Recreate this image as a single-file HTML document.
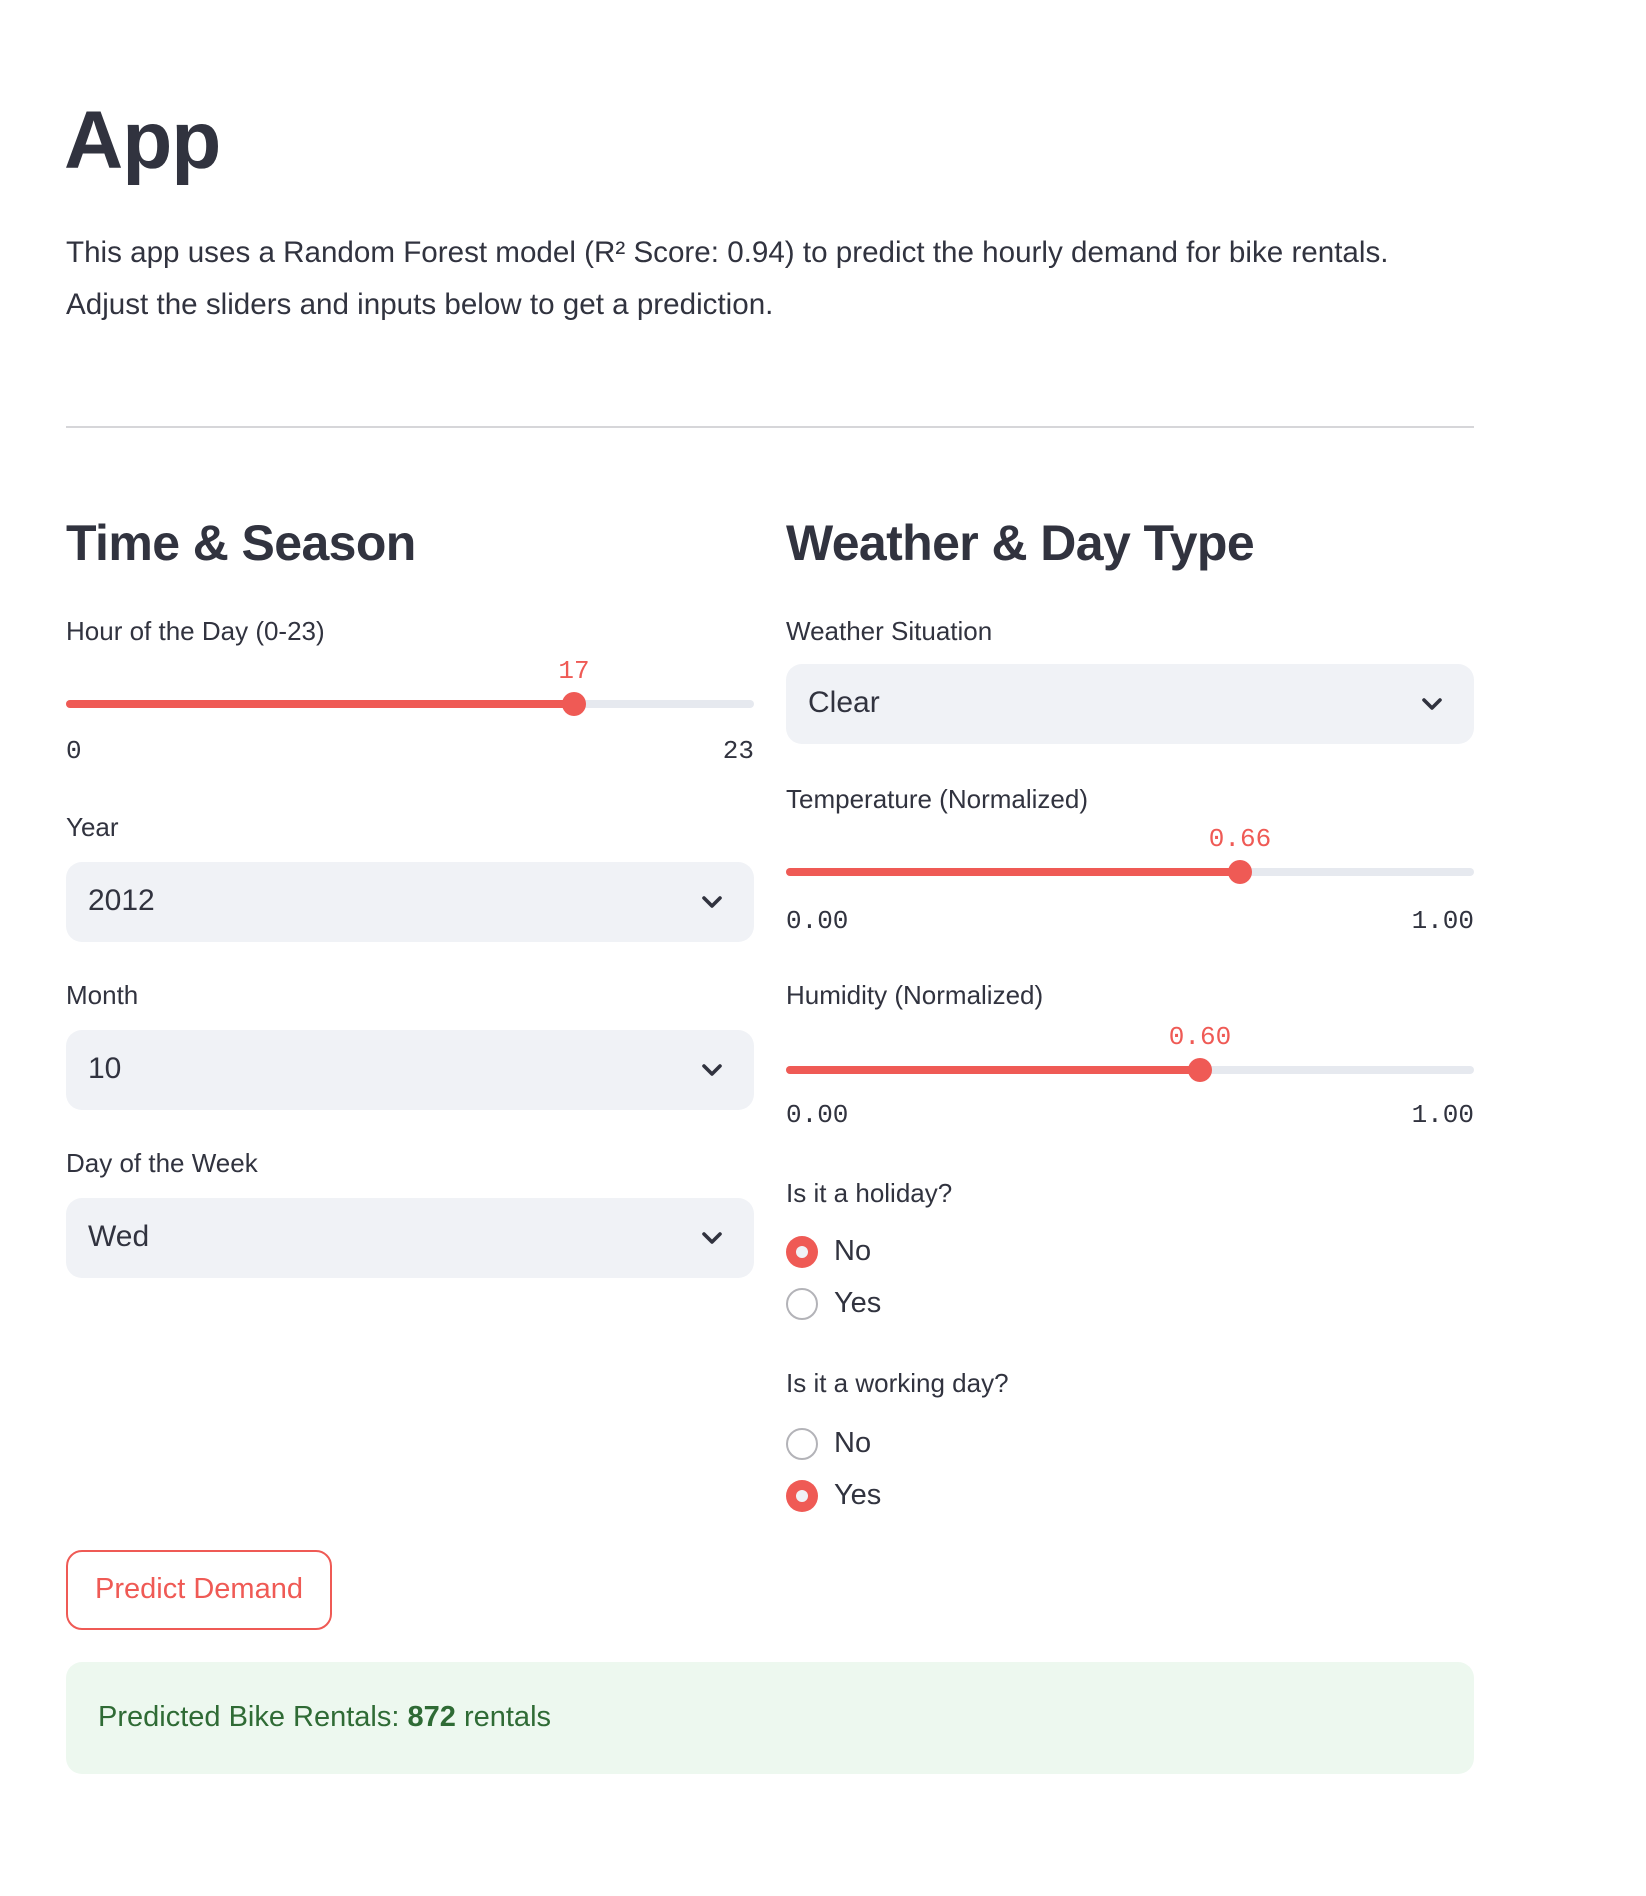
<!DOCTYPE html>
<html><head><meta charset="utf-8">
<style>
html,body{margin:0;padding:0;background:#fff;}
body{width:1646px;height:1896px;overflow:hidden;}
#w{position:absolute;left:0;top:0;width:823px;height:948px;transform:scale(2);transform-origin:0 0;font-family:"Liberation Sans",sans-serif;color:#31333f;}
.a{position:absolute;white-space:nowrap;}
.lbl{font-size:13px;height:20px;line-height:20px;}
.mono{font-family:"Liberation Mono",monospace;font-size:13px;height:20px;line-height:20px;}
.track{position:absolute;height:4px;border-radius:2px;background:#e6e9ef;}
.fill{position:absolute;left:0;top:0;height:4px;border-radius:2px;background:#ef5a55;}
.thumb{position:absolute;width:12px;height:12px;border-radius:50%;background:#ef5a55;}
.sel{position:absolute;left:0;width:344px;height:40px;background:#f0f2f6;border-radius:8px;}
.sel span{position:absolute;left:11px;top:0;line-height:40px;font-size:15px;}
.sel svg{position:absolute;right:16px;top:17px;}
.rad{position:absolute;width:16px;height:16px;border-radius:50%;box-sizing:border-box;}
.on{background:#ef5a55;}
.on::after{content:"";position:absolute;left:5px;top:5px;width:6px;height:6px;border-radius:50%;background:#f0f2f6;}
.off{border:1px solid #b3b3b8;background:#fff;}
.rt{font-size:14.5px;height:20px;line-height:20px;}
</style></head><body><div id="w">
<div class="a" style="left:32px;top:42px;font-size:41px;font-weight:bold;line-height:56px;letter-spacing:-0.5px;">App</div>
<div class="a" style="left:33px;top:115px;font-size:14.8px;line-height:25.6px;">This app uses a Random Forest model (R² Score: 0.94) to predict the hourly demand for bike rentals.<br>Adjust the sliders and inputs below to get a prediction.</div>
<div class="a" style="left:33px;top:213px;width:704px;height:1px;background:#d6d6d9;"></div>

<div class="a" style="left:33px;top:255px;font-size:25px;font-weight:bold;line-height:34px;letter-spacing:-0.3px;">Time &amp; Season</div>
<div class="a lbl" style="left:33px;top:306px;">Hour of the Day (0-23)</div>
<div class="a mono" style="left:277px;top:326px;color:#ef5a55;width:20px;text-align:center;">17</div>
<div class="track" style="left:33px;top:350px;width:344px;"><div class="fill" style="width:254px;"></div></div>
<div class="thumb" style="left:281px;top:346px;"></div>
<div class="a mono" style="left:33px;top:366px;">0</div>
<div class="a mono" style="left:297px;top:366px;width:80px;text-align:right;">23</div>

<div class="a lbl" style="left:33px;top:404px;">Year</div>
<div class="sel" style="left:33px;top:431px;"><span>2012</span><svg width="10" height="6" viewBox="0 0 10 6"><path d="M1 1L5 5L9 1" fill="none" stroke="#31333f" stroke-width="1.8" stroke-linecap="round" stroke-linejoin="round"/></svg></div>
<div class="a lbl" style="left:33px;top:488px;">Month</div>
<div class="sel" style="left:33px;top:515px;"><span>10</span><svg width="10" height="6" viewBox="0 0 10 6"><path d="M1 1L5 5L9 1" fill="none" stroke="#31333f" stroke-width="1.8" stroke-linecap="round" stroke-linejoin="round"/></svg></div>
<div class="a lbl" style="left:33px;top:572px;">Day of the Week</div>
<div class="sel" style="left:33px;top:599px;"><span>Wed</span><svg width="10" height="6" viewBox="0 0 10 6"><path d="M1 1L5 5L9 1" fill="none" stroke="#31333f" stroke-width="1.8" stroke-linecap="round" stroke-linejoin="round"/></svg></div>

<div class="a" style="left:393px;top:255px;font-size:25px;font-weight:bold;line-height:34px;letter-spacing:-0.3px;">Weather &amp; Day Type</div>
<div class="a lbl" style="left:393px;top:306px;">Weather Situation</div>
<div class="sel" style="left:393px;top:332px;"><span>Clear</span><svg width="10" height="6" viewBox="0 0 10 6"><path d="M1 1L5 5L9 1" fill="none" stroke="#31333f" stroke-width="1.8" stroke-linecap="round" stroke-linejoin="round"/></svg></div>

<div class="a lbl" style="left:393px;top:390px;">Temperature (Normalized)</div>
<div class="a mono" style="left:595px;top:410px;color:#ef5a55;width:50px;text-align:center;">0.66</div>
<div class="track" style="left:393px;top:434px;width:344px;"><div class="fill" style="width:227px;"></div></div>
<div class="thumb" style="left:614px;top:430px;"></div>
<div class="a mono" style="left:393px;top:451px;">0.00</div>
<div class="a mono" style="left:657px;top:451px;width:80px;text-align:right;">1.00</div>

<div class="a lbl" style="left:393px;top:488px;">Humidity (Normalized)</div>
<div class="a mono" style="left:575px;top:509px;color:#ef5a55;width:50px;text-align:center;">0.60</div>
<div class="track" style="left:393px;top:533px;width:344px;"><div class="fill" style="width:206px;"></div></div>
<div class="thumb" style="left:593.5px;top:529px;"></div>
<div class="a mono" style="left:393px;top:548px;">0.00</div>
<div class="a mono" style="left:657px;top:548px;width:80px;text-align:right;">1.00</div>

<div class="a lbl" style="left:393px;top:587px;">Is it a holiday?</div>
<div class="rad on" style="left:393px;top:618px;"></div><div class="a rt" style="left:417px;top:616px;">No</div>
<div class="rad off" style="left:393px;top:644px;"></div><div class="a rt" style="left:417px;top:642px;">Yes</div>

<div class="a lbl" style="left:393px;top:682px;">Is it a working day?</div>
<div class="rad off" style="left:393px;top:714px;"></div><div class="a rt" style="left:417px;top:712px;">No</div>
<div class="rad on" style="left:393px;top:740px;"></div><div class="a rt" style="left:417px;top:738px;">Yes</div>

<div class="a" style="left:33px;top:775px;width:133px;height:40px;box-sizing:border-box;border:1px solid #ef5a55;border-radius:8px;color:#ef5a55;font-size:14.5px;line-height:38px;text-align:center;">Predict Demand</div>

<div class="a" style="left:33px;top:831px;width:704px;height:56px;background:#edf8ef;border-radius:8px;"></div>
<div class="a" style="left:49px;top:849px;font-size:14.5px;line-height:20px;color:#2f6b35;">Predicted Bike Rentals: <b>872</b> rentals</div>
</div></body></html>
